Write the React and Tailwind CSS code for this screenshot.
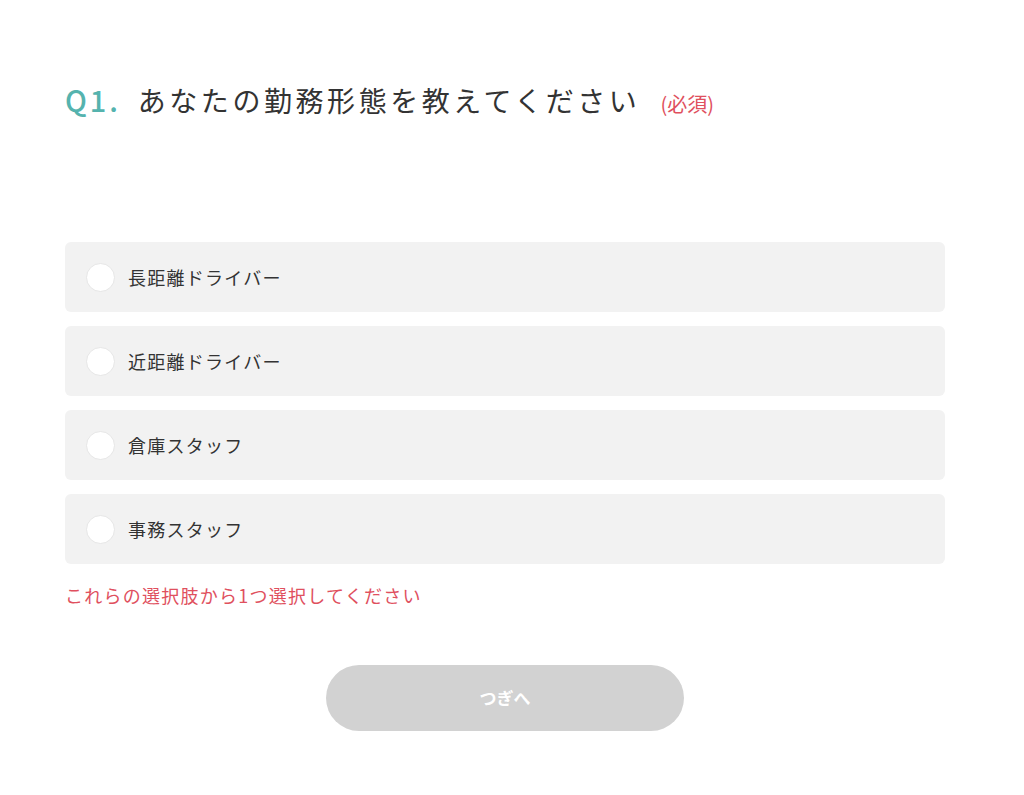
const options = ["長距離ドライバー", "近距離ドライバー", "倉庫スタッフ", "事務スタッフ"];

const font = { fontFamily: '"Noto Sans CJK JP", "Noto Sans", sans-serif' };

export default function App() {
  return (
    <div className="min-h-[795px] bg-white" style={font}>
      <div className="ml-[65px] w-[880px] pt-[79px]">
        {/* Question title */}
        <h1 className="flex items-baseline">
          <span className="text-[29px] font-medium text-[#55b3ae] tracking-[0.1em] leading-[40px]">
            Q1.
          </span>
          <span className="ml-[17px] text-[28px] text-[#333] tracking-[0.127em] leading-[40px]">
            あなたの勤務形態を教えてください
          </span>
          <span className="ml-[20px] text-[20px] text-[#e0505e]">(必須)</span>
        </h1>

        {/* Options */}
        <div className="mt-[122px] flex flex-col gap-[14px]">
          {options.map((label) => (
            <label
              key={label}
              className="flex h-[70px] items-center rounded-[6px] bg-[#f2f2f2] pl-[21px]"
            >
              <span className="h-[29px] w-[29px] rounded-full border border-[#e6e6e6] bg-white" />
              <span className="ml-[13px] text-[18px] text-[#333] tracking-[0.07em]">
                {label}
              </span>
            </label>
          ))}
        </div>

        <p className="mt-[18px] text-[18px] text-[#e0505e] tracking-[0.07em]">
          これらの選択肢から1つ選択してください
        </p>

        {/* Next button */}
        <div className="mt-[56px] flex justify-center">
          <button className="h-[66px] w-[358px] rounded-full bg-[#d2d2d2] text-[17px] font-bold text-white">
            つぎへ
          </button>
        </div>
      </div>
    </div>
  );
}
